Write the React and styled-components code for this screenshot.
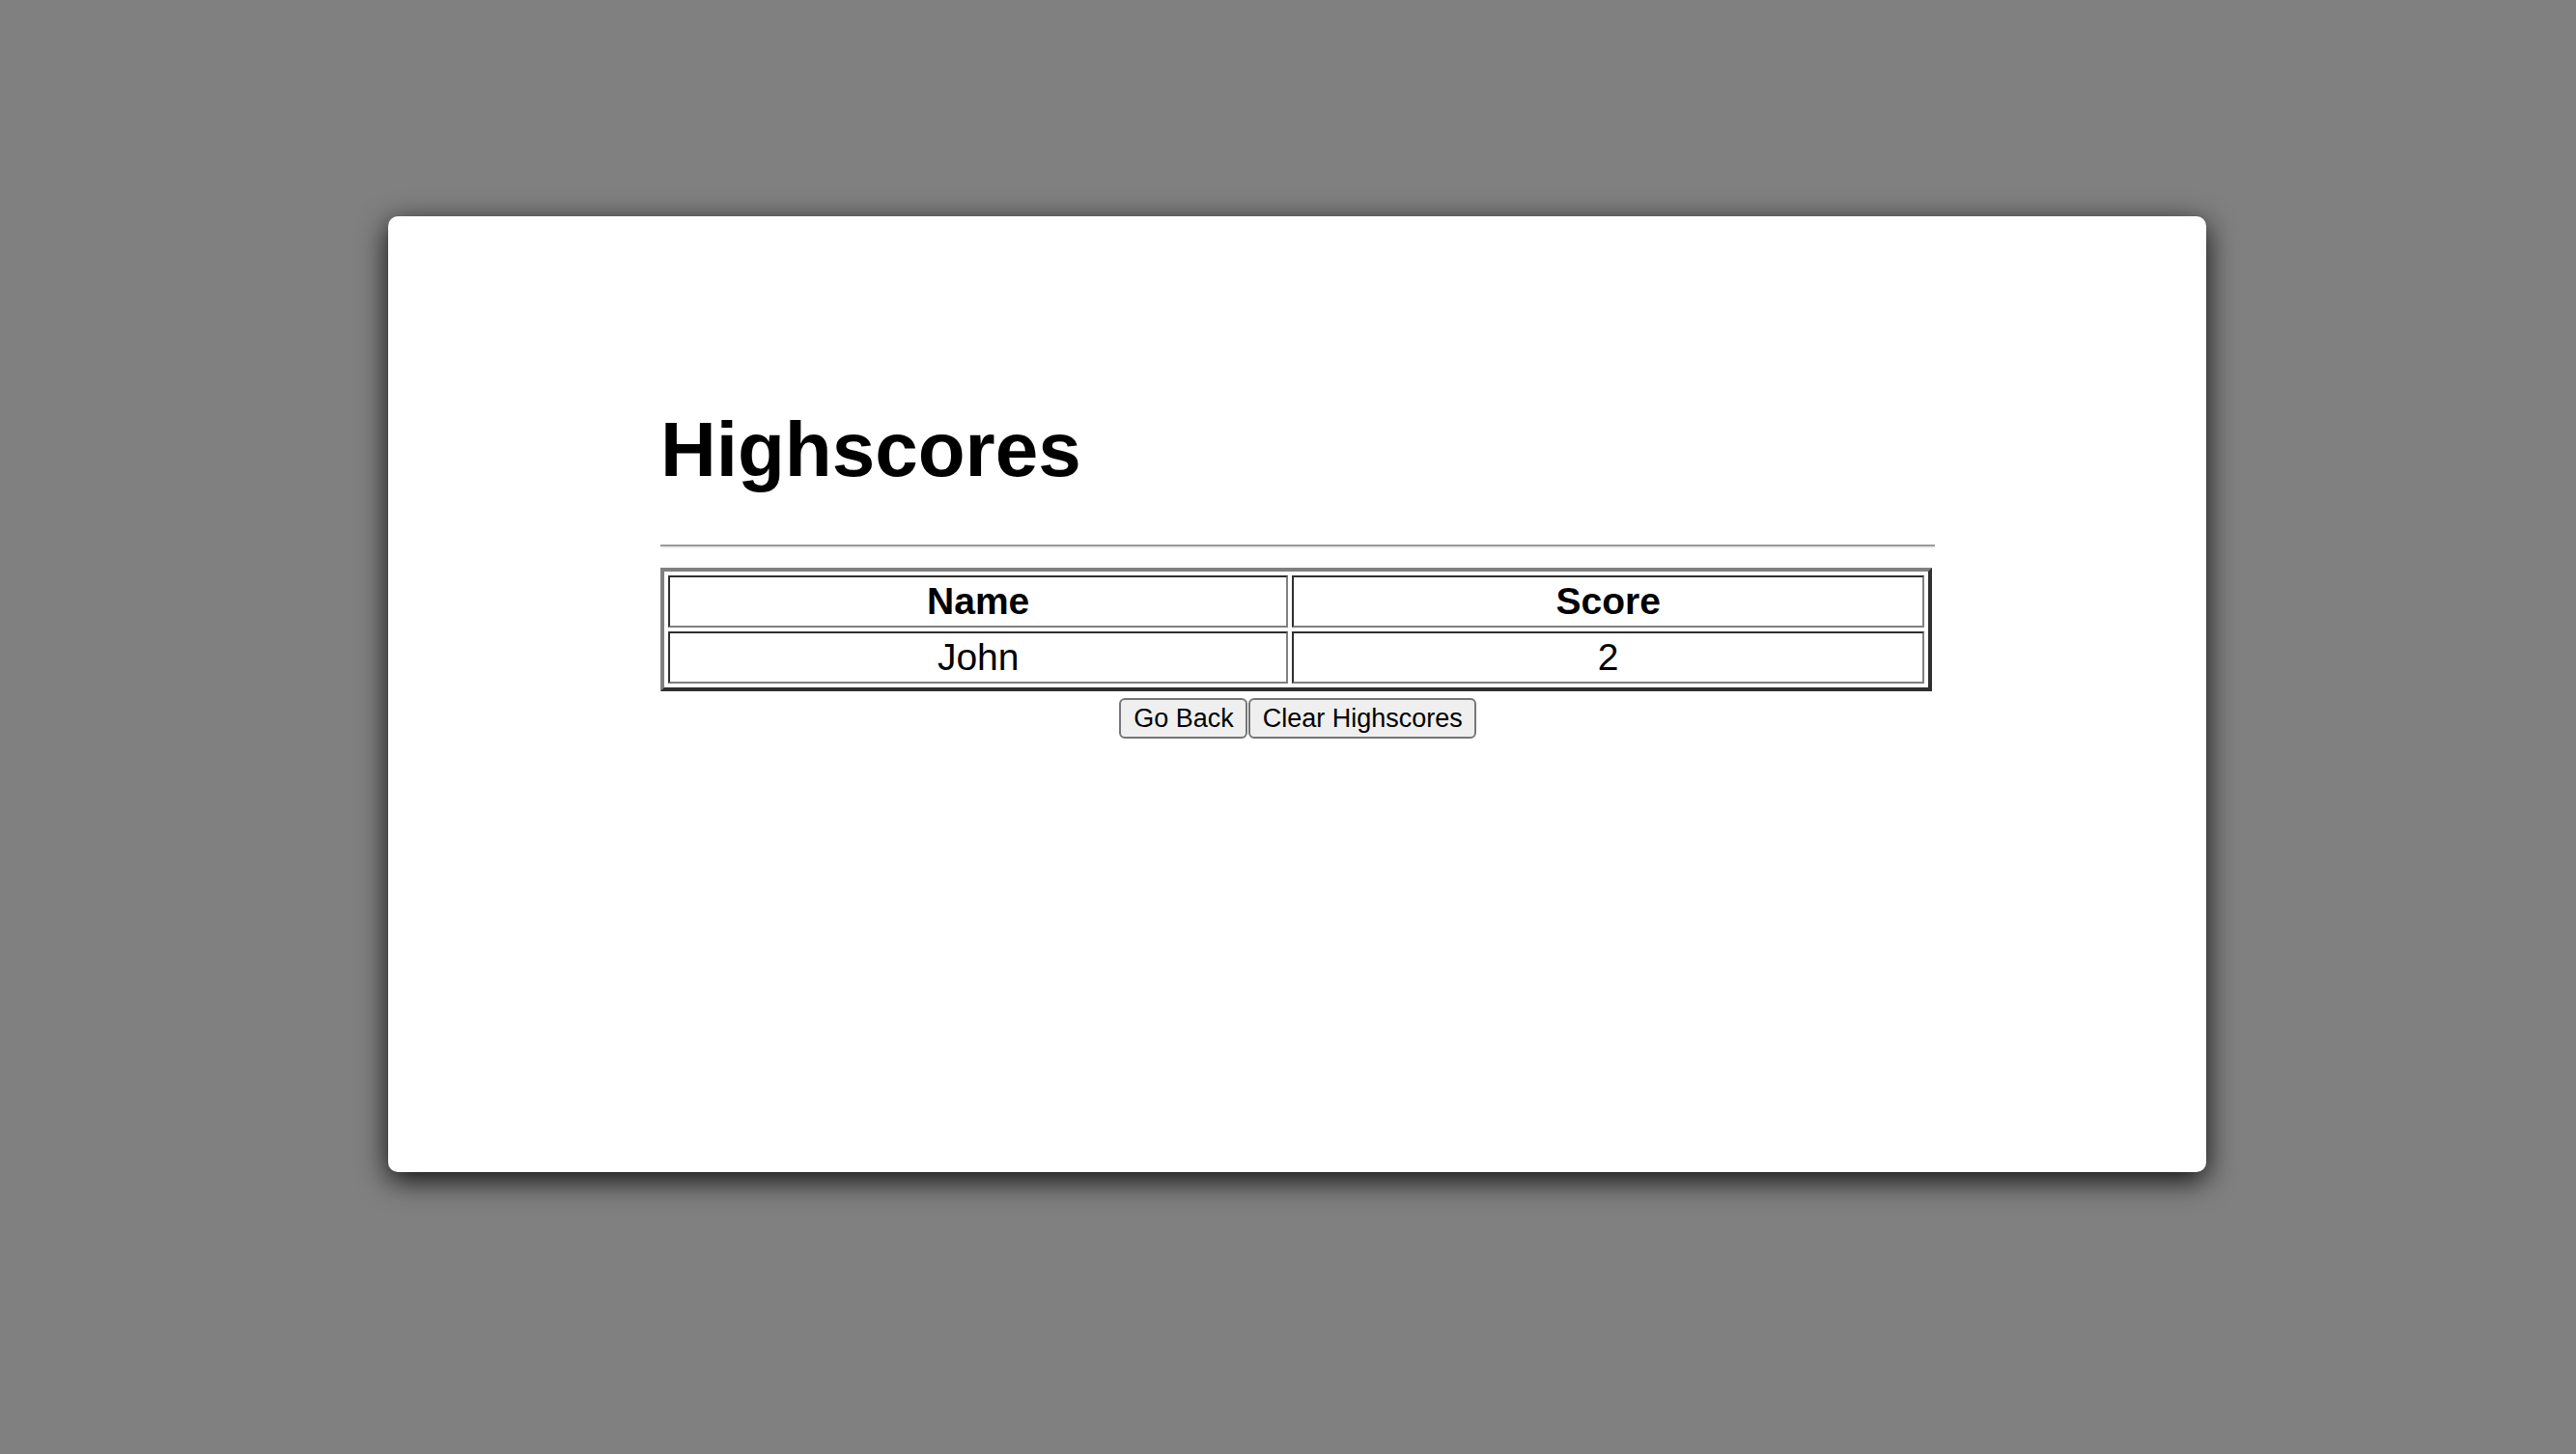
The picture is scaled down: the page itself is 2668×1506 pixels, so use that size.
import styled, { createGlobalStyle } from 'styled-components';

const GlobalStyle = createGlobalStyle`
  html, body {
    margin: 0;
    padding: 0;
    background-color: #808080;
    font-family: "Liberation Sans", Arial, sans-serif;
  }
`;

const Page = styled.div`
  min-height: 1506px;
  padding-top: 224px;
  box-sizing: border-box;
`;

const Card = styled.main`
  width: 1883px;
  height: 990px;
  margin-left: 402px;
  box-sizing: border-box;
  padding: 196px 281px 0 282px;
  background-color: #fff;
  border-radius: 10px;
  box-shadow: 0 8px 30px rgba(0, 0, 0, 0.9);
`;

const Title = styled.h1`
  margin: 0 0 52px;
  font-size: 80px;
  line-height: 92px;
  font-weight: 700;
  color: #000;
`;

const Rule = styled.hr`
  margin: 0 0 20px;
  height: 0;
  border: none;
  border-top: 2px solid #9a9a9a;
  border-bottom: 2px solid #eeeeee;
`;

const ScoreTable = styled.table`
  width: 1317px;
  border-collapse: separate;
  border-spacing: 4px;
  border-style: solid;
  border-width: 4px;
  border-color: #808080 #2f2f2f #2f2f2f #808080;
`;

const Cell = styled.td`
  padding: 2px;
  text-align: center;
  font-size: 39px;
  line-height: 46px;
  font-weight: ${(p) => (p.$head ? 700 : 400)};
  color: #000;
  border-style: solid;
  border-width: 2px;
  border-color: #2f2f2f #808080 #808080 #2f2f2f;
`;

const Actions = styled.div`
  display: flex;
  justify-content: center;
  gap: 1px;
  margin-top: 7px;
`;

const Button = styled.button`
  font-family: "Liberation Sans", Arial, sans-serif;
  font-size: 27px;
  line-height: 32px;
  padding: 3px 12px 3px 13px;
  color: #000;
  background-color: #efefef;
  border: 2px solid #767676;
  border-radius: 6px;
  cursor: pointer;
`;

const scores = [{ name: 'John', score: 2 }];

export default function App() {
  return (
    <>
      <GlobalStyle />
      <Page>
        <Card>
          <Title>Highscores</Title>
          <Rule />
          <ScoreTable>
            <thead>
              <tr>
                <Cell as="th" $head>Name</Cell>
                <Cell as="th" $head>Score</Cell>
              </tr>
            </thead>
            <tbody>
              {scores.map((s) => (
                <tr key={s.name}>
                  <Cell>{s.name}</Cell>
                  <Cell>{s.score}</Cell>
                </tr>
              ))}
            </tbody>
          </ScoreTable>
          <Actions>
            <Button>Go Back</Button>
            <Button>Clear Highscores</Button>
          </Actions>
        </Card>
      </Page>
    </>
  );
}
